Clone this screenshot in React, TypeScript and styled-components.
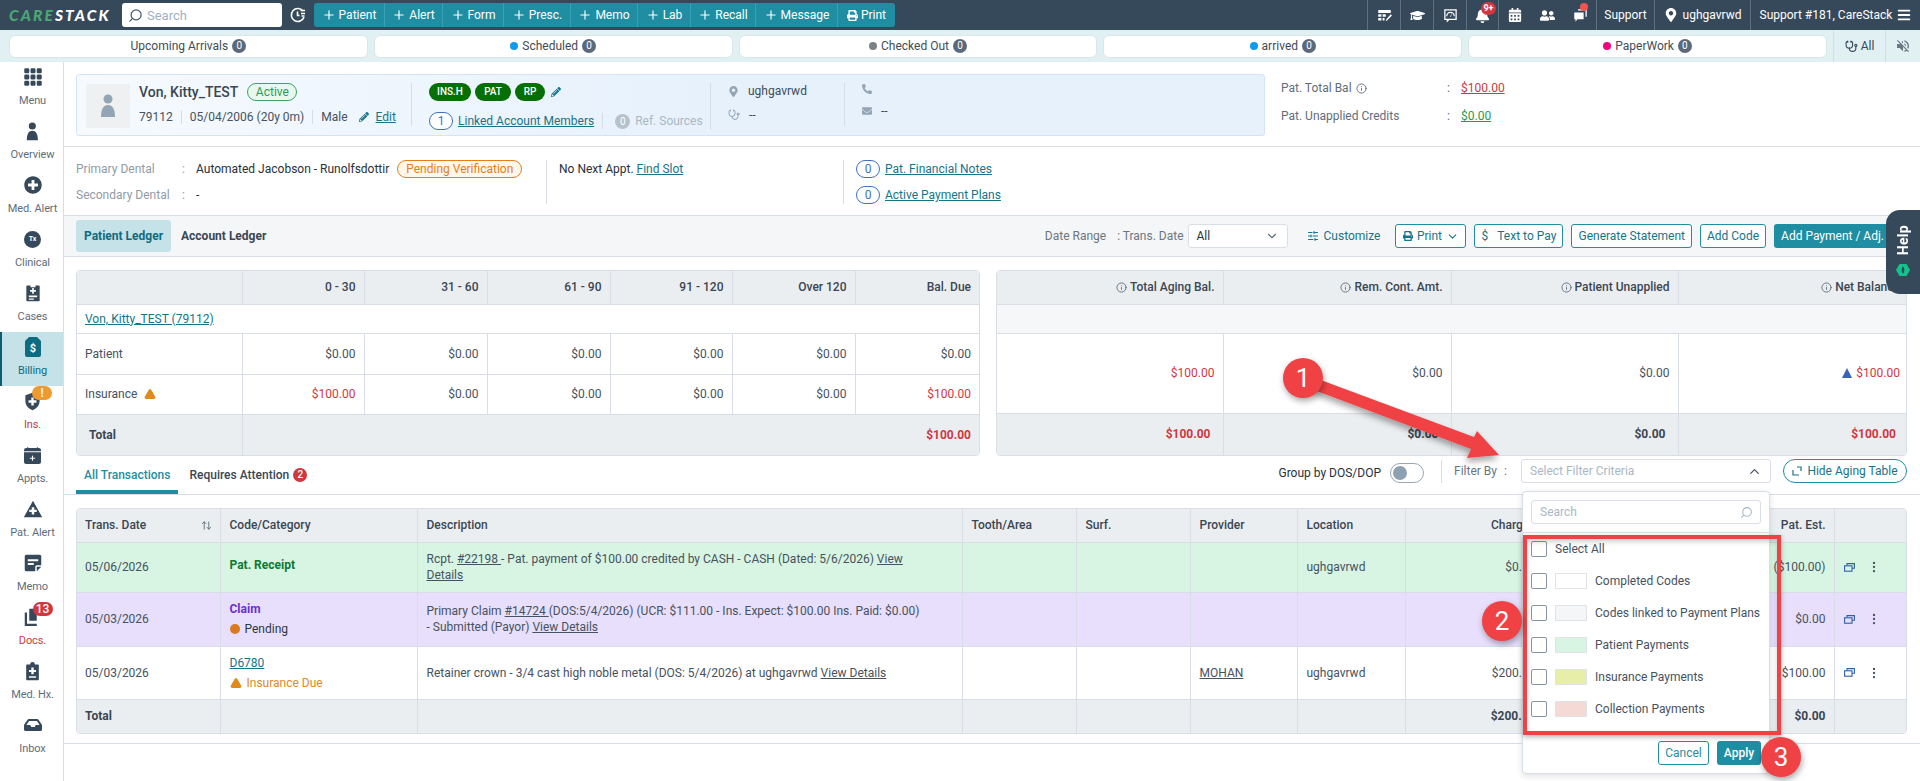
import React from "react";
import styled, { createGlobalStyle } from "styled-components";
import {
  FaBars,
  FaBell,
  FaCalendarAlt,
  FaGraduationCap,
  FaInbox,
  FaMapMarkerAlt,
  FaPencilAlt,
  FaPhoneAlt,
  FaPlusCircle,
  FaPrint,
  FaUserFriends,
  FaEnvelope,
} from "react-icons/fa";
import { BsCalendarPlusFill, BsGrid3X3GapFill } from "react-icons/bs";
import { MdVolumeOff } from "react-icons/md";
import {
  ArrowUpDown,
  ChevronDown,
  ChevronUp,
  Info,
  MoreVertical,
  Plus,
  Search,
  SlidersHorizontal,
  Stethoscope,
  TriangleAlert,
} from "lucide-react";

const TEAL = "#1f8ea3";
const DARK = "#36495a";
const LINE = "#d9dee6";
const HEAD = "#ebeef1";
const TEXT = "#46525f";
const RED = "#d1373f";

const GlobalStyle = createGlobalStyle`
  html, body { margin: 0; padding: 0; background: #fff; }
  body { font-family: Roboto, "Liberation Sans", sans-serif; font-size: 12px; color: ${TEXT}; }
  * { box-sizing: border-box; }
`;

const Page = styled.div`
  position: relative;
  width: 1920px;
  height: 781px;
  overflow: hidden;
  display: flex;
  flex-direction: column;
`;

/* top bar */
const TopBar = styled.header`
  height: 30px;
  background: ${DARK};
  display: flex;
  align-items: center;
  color: #fff;
  flex: none;
`;

const Logo = styled.div`
  width: 102px;
  margin-left: 9px;
  font-family: Lato, Roboto, sans-serif;
  font-style: italic;
  font-weight: 900;
  font-size: 15.5px;
  letter-spacing: 2.1px;
  white-space: nowrap;
  color: #fff;
  span { color: #4aa873; }
`;

const SearchBox = styled.div`
  width: 160px;
  height: 24px;
  margin-left: 11px;
  background: #fff;
  border-radius: 3px;
  display: flex;
  align-items: center;
  gap: 4px;
  padding-left: 6px;
  color: #9fb1c2;
  font-size: 13px;
  svg { transform: scaleX(-1); color: #44576a; }
`;

const ClockWrap = styled.div`
  width: 32px;
  display: flex;
  justify-content: center;
  margin-left: 0;
`;

const ActionGroup = styled.div`
  display: flex;
  height: 24px;
  background: ${TEAL};
  border-radius: 3px;
`;

const ActionButton = styled.div<{ $w: number }>`
  width: ${(p) => p.$w}px;
  display: flex;
  align-items: center;
  justify-content: center;
  gap: 3px;
  color: #fff;
  border-right: 1px solid #3aa0b3;
  &:last-child { border-right: 0; }
`;

const TopRight = styled.div`
  margin-left: auto;
  display: flex;
  height: 30px;
`;

const TopCell = styled.div<{ $w: number; $plain?: boolean }>`
  position: relative;
  width: ${(p) => p.$w}px;
  display: flex;
  align-items: center;
  justify-content: center;
  gap: 5px;
  white-space: nowrap;
  border-left: ${(p) => (p.$plain ? "0" : "1px solid #5d6f80")};
`;

const TinyBadge = styled.span`
  position: absolute;
  top: 2px;
  left: 14px;
  min-width: 15px;
  height: 13px;
  border-radius: 7px;
  background: ${RED};
  color: #fff;
  font-size: 9px;
  font-weight: 700;
  line-height: 13px;
  text-align: center;
`;

const RedDot = styled.span`
  position: absolute;
  top: 3px;
  right: 8px;
  width: 8px;
  height: 8px;
  border-radius: 50%;
  background: #f4544f;
`;

/* arrivals strip */
const StatusBar = styled.div`
  height: 32px;
  background: #e0f0f3;
  display: flex;
  align-items: center;
  padding-left: 9px;
  gap: 6px;
  flex: none;
`;

const StatusPill = styled.div`
  width: 359px;
  height: 23px;
  background: #fff;
  border: 1px solid #d8e7ea;
  border-radius: 6px;
  display: flex;
  align-items: center;
  justify-content: center;
  gap: 4px;
  color: #3f4c59;
`;

const Dot = styled.span<{ $c: string }>`
  width: 8px;
  height: 8px;
  border-radius: 50%;
  background: ${(p) => p.$c};
`;

const CountBadge = styled.span`
  width: 14px;
  height: 14px;
  border-radius: 50%;
  background: #5a6a7c;
  color: #fff;
  font-size: 10px;
  line-height: 14px;
  text-align: center;
`;

const StripTool = styled.div<{ $w: number; $c?: string }>`
  width: ${(p) => p.$w}px;
  height: 32px;
  display: flex;
  align-items: center;
  justify-content: center;
  gap: 3px;
  border-left: 1px solid #cfe0e4;
  color: ${(p) => p.$c || DARK};
`;

const ToolRow = styled.div`
  display: flex;
  margin-left: 0;
`;

/* side nav */
const Body = styled.div`
  flex: 1;
  display: flex;
  min-height: 0;
`;

const SideNav = styled.nav`
  width: 64px;
  flex: none;
  border-right: 1px solid ${LINE};
`;

const NavItem = styled.div<{ $active?: boolean }>`
  height: 54px;
  padding-top: 5px;
  display: flex;
  flex-direction: column;
  align-items: center;
  background: ${(p) => (p.$active ? "#c5e2e8" : "transparent")};
  border-left: 2px solid ${(p) => (p.$active ? "#0d5e70" : "transparent")};
  margin-right: 0;
`;

const NavIcon = styled.div<{ $c?: string }>`
  position: relative;
  height: 20px;
  display: flex;
  align-items: center;
  color: ${(p) => p.$c || DARK};
`;

const NavLabel = styled.div<{ $c?: string }>`
  margin-top: 7px;
  font-size: 11px;
  line-height: 14px;
  letter-spacing: -0.1px;
  color: ${(p) => p.$c || "#5f6d7b"};
  white-space: nowrap;
`;

const TxCircle = styled.div`
  width: 17px;
  height: 17px;
  border-radius: 50%;
  background: ${DARK};
  color: #fff;
  font-size: 7px;
  font-weight: 700;
  line-height: 17px;
  text-align: center;
`;

const NavBadge = styled.span<{ $c: string }>`
  position: absolute;
  top: -5px;
  left: 9px;
  width: 20px;
  height: 14px;
  border-radius: 7px;
  background: ${(p) => p.$c};
  color: #fff;
  font-size: 12px;
  font-weight: 500;
  line-height: 14px;
  text-align: center;
`;

/* main column */
const Main = styled.main`
  flex: 1;
  min-width: 0;
  display: flex;
  flex-direction: column;
`;

const PatientBar = styled.section`
  height: 85px;
  padding: 12px 0 0 12px;
  display: flex;
  border-bottom: 1px solid ${LINE};
  flex: none;
`;

const PatientCard = styled.div`
  width: 1189px;
  height: 62px;
  background: linear-gradient(90deg, #f6faff 0%, #e6f1fc 55%);
  border: 1px solid #d5e3f7;
  border-radius: 3px;
  display: grid;
  grid-template-columns: 335px 299px 134px 1fr;
  grid-template-rows: 60px;
  align-items: stretch;
`;

const CardCol = styled.div<{ $last?: boolean }>`
  position: relative;
  margin: 8px 0 9px;
  border-right: ${(p) => (p.$last ? "0" : "1px solid #d5dde6")};
  display: flex;
  flex-direction: column;
  justify-content: space-between;
`;

const PersonCol = styled(CardCol)`
  flex-direction: row;
  justify-content: flex-start;
  margin-left: 9px;
  gap: 9px;
`;

const Avatar = styled.div`
  width: 44px;
  height: 44px;
  margin-top: 1px;
  background: #eef0f2;
  border-radius: 2px;
  display: flex;
  align-items: center;
  justify-content: center;
  color: #93a4b4;
`;

const PersonInfo = styled.div`
  display: flex;
  flex-direction: column;
  gap: 9px;
`;

const PatientName = styled.div`
  display: flex;
  align-items: center;
  gap: 9px;
  height: 18px;
  font-size: 14px;
  font-weight: 500;
  color: #3a4653;
`;

const ActiveTag = styled.span`
  height: 18px;
  width: 50px;
  border: 1px solid #3aa663;
  border-radius: 9px;
  background: #e9f8ee;
  color: #2b9a56;
  font-size: 12px;
  font-weight: 400;
  line-height: 16px;
  text-align: center;
`;

const MetaRow = styled.div`
  display: flex;
  align-items: center;
  height: 14px;
`;

const MetaItem = styled.span`
  padding-right: 8px;
  margin-right: 8px;
  border-right: 1px solid #d5dde6;
  line-height: 14px;
  white-space: nowrap;
`;

const TealLink = styled.a`
  color: #14758a;
  text-decoration: underline;
  white-space: nowrap;
`;

const TagsCol = styled(CardCol)`
  padding-left: 17px;
  margin-bottom: 5px;
`;

const TagRow = styled.div`
  display: flex;
  align-items: center;
  gap: 4px;
  height: 18px;
`;

const GreenTag = styled.span<{ $w: number }>`
  width: ${(p) => p.$w}px;
  height: 18px;
  border-radius: 9px;
  background: #067006;
  color: #fff;
  font-size: 10px;
  font-weight: 500;
  line-height: 18px;
  text-align: center;
`;

const RingCount = styled.span<{ $w?: number }>`
  width: ${(p) => p.$w || 24}px;
  height: 18px;
  border: 1px solid #3e6fc4;
  border-radius: 9px;
  color: #3e6fc4;
  background: #fff;
  line-height: 16px;
  text-align: center;
  flex: none;
`;

const MutedCount = styled.span`
  width: 15px;
  height: 15px;
  border-radius: 50%;
  background: #b5c2cc;
  color: #fff;
  font-size: 10px;
  line-height: 15px;
  text-align: center;
`;

const LinkedRow = styled.div`
  display: flex;
  align-items: center;
  gap: 5px;
`;

const MutedText = styled.span`
  color: #a9b8c4;
  white-space: nowrap;
`;

const ThinRule = styled.span`
  width: 1px;
  height: 16px;
  background: #d5dde6;
  margin: 0 7px 0 3px;
`;

const InfoLines = styled(CardCol)`
  padding: 1px 0 4px 17px;
`;

const ContactCol = styled(CardCol)`
  margin: 7px 0 9px;
  padding: 0 0 8px 17px;
`;

const InfoLine = styled.div`
  display: flex;
  align-items: center;
  gap: 9px;
  height: 14px;
  color: #3f4c59;
  svg { color: #93a4b4; flex: none; }
`;

const Balances = styled.div`
  margin: 7px 0 0 16px;
  display: grid;
  grid-template-columns: 166px 14px auto;
  grid-auto-rows: 14px;
  row-gap: 14px;
  align-items: center;
  align-content: start;
  color: #5f6d7b;
`;

const BalanceLabel = styled.span`
  display: flex;
  align-items: center;
  gap: 4px;
`;

const Amount = styled.a<{ $c: string }>`
  color: ${(p) => p.$c};
  text-decoration: underline;
`;

const InsuranceBar = styled.section`
  height: 69px;
  padding: 13px 0 0 12px;
  display: flex;
  border-bottom: 1px solid ${LINE};
  flex: none;
`;

const InsuranceGrid = styled.div`
  width: 482px;
  display: grid;
  grid-template-columns: 106px 14px 1fr;
  grid-auto-rows: 18px;
  row-gap: 8px;
  align-items: center;
  align-content: start;
`;

const GreyLabel = styled.span`
  color: #8f9ba7;
`;

const DarkValue = styled.span`
  display: flex;
  align-items: center;
  gap: 8px;
  color: #26313c;
  white-space: nowrap;
`;

const PendingTag = styled.span`
  width: 125px;
  height: 18px;
  border: 1px solid #e57f15;
  border-radius: 9px;
  background: #fff6ec;
  color: #e57f15;
  line-height: 16px;
  text-align: center;
`;

const NextAppt = styled.div`
  width: 297px;
  height: 44px;
  border-left: 1px solid ${LINE};
  padding: 2px 0 0 12px;
  margin-left: -12px;
  color: #26313c;
  line-height: 14px;
`;

const NotesCol = styled.div`
  height: 44px;
  border-left: 1px solid ${LINE};
  padding-left: 12px;
  display: flex;
  flex-direction: column;
  justify-content: space-between;
  margin-top: 0;
`;

const LedgerBar = styled.section`
  height: 41px;
  background: #f5f6f8;
  border-bottom: 1px solid ${LINE};
  padding: 0 29px 0 12px;
  display: flex;
  align-items: center;
  flex: none;
`;

const LedgerTab = styled.div<{ $on?: boolean }>`
  height: 32px;
  padding: 0 8px;
  margin-right: ${(p) => (p.$on ? "2px" : "0")};
  border-radius: 3px;
  display: flex;
  align-items: center;
  font-weight: 700;
  background: ${(p) => (p.$on ? "#c5e2e8" : "transparent")};
  color: ${(p) => (p.$on ? "#0f6b7e" : "#3a4653")};
`;

const LedgerTools = styled.div`
  margin-left: auto;
  display: flex;
  align-items: center;
`;

const ToolLabel = styled.span<{ $mr?: number }>`
  color: #6a7682;
  margin-right: ${(p) => p.$mr || 0}px;
  white-space: nowrap;
`;

const SelectBox = styled.div`
  width: 100px;
  height: 24px;
  margin: 0 19px 0 4px;
  background: #fff;
  border: 1px solid ${LINE};
  border-radius: 3px;
  padding: 0 8px;
  display: flex;
  align-items: center;
  justify-content: space-between;
  color: #26313c;
  svg { color: #5f6d7b; }
`;

const CustomizeLink = styled.div`
  display: flex;
  align-items: center;
  gap: 5px;
  color: #14758a;
  margin-right: 15px;
`;

const OutlineButton = styled.div<{ $w?: number }>`
  height: 24px;
  ${(p) => (p.$w ? `width: ${p.$w}px; justify-content: center;` : "padding: 0 6px;")}
  margin-right: 8px;
  border: 1px solid ${TEAL};
  border-radius: 3px;
  background: #fff;
  color: #14758a;
  display: flex;
  align-items: center;
  gap: 4px;
  white-space: nowrap;
`;

const FilledButton = styled.div`
  height: 24px;
  padding: 0 7px;
  border-radius: 3px;
  background: ${TEAL};
  color: #fff;
  display: flex;
  align-items: center;
  white-space: nowrap;
`;

/* aging tables */
const AgingSection = styled.section`
  height: 198px;
  padding: 13px 13px 0 12px;
  display: flex;
  gap: 16px;
  flex: none;
`;

const TableFrame = styled.div<{ $w: number }>`
  width: ${(p) => p.$w}px;
  border: 1px solid ${LINE};
  border-radius: 4px;
  overflow: hidden;
  align-self: flex-start;
`;

const Grid = styled.table`
  width: 100%;
  border-collapse: collapse;
  table-layout: fixed;
`;

const Row = styled.tr<{ $h: number; $bg?: string }>`
  height: ${(p) => p.$h}px;
  background: ${(p) => p.$bg || "#fff"};
`;

const Th = styled.th<{ $right?: boolean }>`
  background: ${HEAD};
  font-weight: 500;
  color: #3a4653;
  padding: 0 8px 0 9px;
  text-align: ${(p) => (p.$right ? "right" : "left")};
  border: 1px solid ${LINE};
  border-width: 0 1px 1px 0;
  white-space: nowrap;
  &:first-child { padding-left: 8px; }
  &:last-child { border-right: 0; }
  svg { vertical-align: -2px; margin-right: 3px; color: #5f6d7b; }
`;

const Td = styled.td<{ $right?: boolean; $c?: string; $bold?: boolean; $head?: boolean; $pr?: number }>`
  padding: 0 ${(p) => p.$pr || 8}px 0 9px;
  text-align: ${(p) => (p.$right ? "right" : "left")};
  color: ${(p) => p.$c || TEXT};
  font-weight: ${(p) => (p.$bold ? 700 : 400)};
  background: ${(p) => (p.$head ? HEAD : "transparent")};
  border: 1px solid ${LINE};
  border-width: 0 1px 1px 0;
  line-height: 16px;
  &:first-child { padding-left: 8px; }
  &:last-child { border-right: 0; }
  tr:last-child > & { border-bottom: 0; }
`;

const TotalLabel = styled(Td)`
  &:first-child { padding-left: 12px; }
`;

const BlueUp = styled.span`
  display: inline-block;
  width: 0;
  height: 0;
  margin-right: 4px;
  border-left: 5px solid transparent;
  border-right: 5px solid transparent;
  border-bottom: 10px solid #3a62b8;
  vertical-align: -1px;
`;

/* transactions */
const TabsBar = styled.section`
  height: 40px;
  border-bottom: 1px solid ${LINE};
  padding: 0 13px 0 12px;
  display: flex;
  align-items: stretch;
  flex: none;
`;

const TxTab = styled.div<{ $on?: boolean }>`
  padding: 0 8px;
  margin-right: ${(p) => (p.$on ? "3px" : "0")};
  display: flex;
  align-items: center;
  gap: 4px;
  font-weight: 500;
  color: ${(p) => (p.$on ? TEAL : "#3a4653")};
  border-bottom: 4px solid ${(p) => (p.$on ? TEAL : "transparent")};
  padding-top: 4px;
`;

const AttentionBadge = styled.span`
  width: 14px;
  height: 14px;
  border-radius: 50%;
  background: ${RED};
  color: #fff;
  font-size: 10px;
  line-height: 14px;
  text-align: center;
`;

const FilterTools = styled.div`
  margin-left: auto;
  display: flex;
  align-items: center;
  padding-bottom: 7px;
`;

const GroupLabel = styled.span`
  color: #26313c;
  margin-top: 3px;
`;

const Toggle = styled.div`
  width: 34px;
  height: 20px;
  margin: 3px 17px 0 9px;
  border: 1px solid #9aa8b5;
  border-radius: 10px;
  padding: 2px;
  background: #fff;
  &::before {
    content: "";
    display: block;
    width: 14px;
    height: 14px;
    border-radius: 50%;
    background: #8ea1b2;
  }
`;

const FilterLabel = styled.div`
  height: 23px;
  border-left: 1px solid ${LINE};
  padding-left: 12px;
  color: #6a7682;
  display: flex;
  align-items: center;
  width: 80px;
  justify-content: space-between;
  padding-right: 14px;
`;

const FilterSelect = styled.div`
  width: 250px;
  height: 24px;
  border: 1px solid ${LINE};
  border-radius: 3px;
  padding: 0 8px;
  color: #a9b8c4;
  background: #fff;
  display: flex;
  align-items: center;
  justify-content: space-between;
  svg { color: #46525f; }
`;

const HideButton = styled.div`
  width: 124px;
  height: 24px;
  margin-left: 12px;
  border: 1px solid ${TEAL};
  border-radius: 12px;
  color: #14758a;
  display: flex;
  align-items: center;
  justify-content: center;
  gap: 5px;
`;

const TxSection = styled.section`
  height: 249px;
  padding: 13px 13px 0 12px;
  border-bottom: 1px solid ${LINE};
  flex: none;
`;

const DescLink = styled.a`
  color: ${TEXT};
  text-decoration: underline;
`;

const SortIcon = styled(ArrowUpDown)`
  float: right;
  margin: 2px 0 0 0 !important;
`;

const CodeTitle = styled.div<{ $c: string; $link?: boolean }>`
  color: ${(p) => p.$c};
  font-weight: ${(p) => (p.$link ? 400 : 700)};
  text-decoration: ${(p) => (p.$link ? "underline" : "none")};
  margin-bottom: 4px;
`;

const CodeStatus = styled.div<{ $c: string }>`
  display: flex;
  align-items: center;
  gap: 5px;
  color: ${(p) => p.$c};
`;

const PendingDot = styled.span`
  width: 10px;
  height: 10px;
  border-radius: 50%;
  background: #d97a1c;
`;

const RowTools = styled.div`
  display: flex;
  align-items: center;
  gap: 12px;
  color: #2e5fa8;
  svg:last-child { color: #4a5664; }
`;

/* open filter menu */
const FilterMenu = styled.div`
  position: absolute;
  left: 1522px;
  top: 491px;
  width: 248px;
  height: 283px;
  background: #fff;
  border: 1px solid ${LINE};
  border-radius: 4px;
  box-shadow: 0 2px 6px rgba(40, 50, 60, 0.15);
`;

const MenuSearch = styled.div`
  margin: 8px 8px 0;
  height: 24px;
  border: 1px solid ${LINE};
  border-radius: 3px;
  padding: 0 7px 0 8px;
  color: #a9b8c4;
  display: flex;
  align-items: center;
  justify-content: space-between;
  svg { transform: scaleX(-1); }
`;

const MenuList = styled.div`
  margin-top: 8px;
  border-top: 1px solid ${LINE};
  padding: 0 0 0 8px;
  height: 200px;
`;

const MenuItem = styled.div`
  height: 32px;
  display: flex;
  align-items: center;
  gap: 8px;
  color: #46525f;
`;

const CheckBox = styled.span`
  width: 16px;
  height: 16px;
  border: 1px solid #8696a5;
  border-radius: 2px;
  background: #fff;
  flex: none;
`;

const Swatch = styled.span<{ $c: string }>`
  width: 32px;
  height: 16px;
  border: 1px solid #e0e4e8;
  background: ${(p) => p.$c};
  flex: none;
`;

const MenuFooter = styled.div`
  display: flex;
  justify-content: flex-end;
  gap: 8px;
  padding: 9px 8px 0 0;
`;

const CancelButton = styled.div`
  width: 51px;
  height: 24px;
  border: 1px solid ${TEAL};
  border-radius: 3px;
  color: ${TEAL};
  line-height: 22px;
  text-align: center;
`;

const ApplyButton = styled.div`
  width: 44px;
  height: 24px;
  border-radius: 3px;
  background: ${TEAL};
  color: #fff;
  line-height: 24px;
  text-align: center;
  font-weight: 500;
`;

/* help tab and the red marks drawn on the screenshot */
const HelpTab = styled.div`
  position: absolute;
  right: 0;
  top: 210px;
  width: 34px;
  height: 84px;
  background: ${DARK};
  border-radius: 14px 0 0 14px;
  display: flex;
  flex-direction: column;
  align-items: center;
  padding-top: 15px;
  gap: 8px;
  color: #fff;
`;

const HelpText = styled.span`
  writing-mode: vertical-rl;
  transform: rotate(180deg);
  font-size: 14px;
  font-weight: 700;
  letter-spacing: 0.3px;
`;

const MarkLayer = styled.svg`
  position: absolute;
  left: 0;
  top: 0;
  pointer-events: none;
`;

const Callout = styled.div<{ $x: number; $y: number }>`
  position: absolute;
  left: ${(p) => p.$x - 20}px;
  top: ${(p) => p.$y - 20}px;
  width: 40px;
  height: 40px;
  border-radius: 50%;
  background: #f04244;
  color: #fff;
  font-size: 26px;
  line-height: 40px;
  text-align: center;
  box-shadow: 1px 3px 6px rgba(0, 0, 0, 0.35);
`;

const RedFrame = styled.div`
  position: absolute;
  left: 1523px;
  top: 535px;
  width: 258px;
  height: 200px;
  border: 4px solid #f04244;
  box-shadow: 0 2px 5px rgba(0, 0, 0, 0.3), inset 0 3px 5px rgba(0, 0, 0, 0.18);
`;

const Svg = ({ s, children, vb = "0 0 24 24" }: { s: number; children: React.ReactNode; vb?: string }) => (
  <svg width={s} height={s} viewBox={vb} fill="currentColor">
    {children}
  </svg>
);

const PersonIcon = ({ h }: { h: number }) => (
  <svg width={(h * 16) / 24} height={h} viewBox="0 0 16 24" fill="currentColor">
    <circle cx="8" cy="5" r="4.500" />
    <path d="M1 23C1 15 3.500 11 8 11s7 4 7 12z" />
  </svg>
);

const RestoreIcon = () => (
  <svg width="11" height="9" viewBox="0 0 11 9" fill="none" stroke="currentColor" strokeWidth="1.1">
    <path d="M3 2.500V.600h7.400v4.600H8" />
    <rect x=".6" y="2.800" width="7.400" height="5.400" />
  </svg>
);

const ClockLines = () => (
  <svg width="16" height="16" viewBox="0 0 16 16" fill="none" stroke="#fff" strokeWidth="1.6">
    <path d="M13 4A6.500 6.500 0 1 0 14 10" />
    <path d="M7.500 4.500v4h2M10.500 3.500H15M11 6.500h4M11.500 9h3" />
  </svg>
);

const navItems: { label: string; icon: React.ReactNode; active?: boolean; c?: string; lc?: string; badge?: [string, string] }[] = [
  { label: "Menu", icon: <BsGrid3X3GapFill size={20} /> },
  { label: "Overview", icon: <PersonIcon h={19} /> },
  { label: "Med. Alert", icon: <FaPlusCircle size={18} /> },
  { label: "Clinical", icon: <TxCircle>Tx</TxCircle> },
  {
    label: "Cases",
    icon: (
      <Svg s={20}>
        <path d="M5 3h4v2h6V3h4a1 1 0 0 1 1 1v17a1 1 0 0 1-1 1H5a1 1 0 0 1-1-1V4a1 1 0 0 1 1-1zm2 12v2h10v-2zm0 3.500v1.500h6v-1.500zM11 6v2.500H8.500v2H11V13h2v-2.500h2.500v-2H13V6z" fillRule="evenodd" />
      </Svg>
    ),
  },
  {
    label: "Billing",
    active: true,
    c: "#0f6b7e",
    lc: "#0f6b7e",
    icon: (
      <svg width="16" height="20" viewBox="0 0 16 20">
        <path d="M4 0h8l4 4v14a2 2 0 0 1-2 2H2a2 2 0 0 1-2-2V4z" fill="currentColor" />
        <text x="8" y="15" fontSize="11" fontWeight="700" fill="#fff" textAnchor="middle" fontFamily="Roboto">$</text>
      </svg>
    ),
  },
  {
    label: "Ins.",
    lc: RED,
    badge: ["!", "#ee9a2f"],
    icon: (
      <Svg s={19}>
        <path d="M12 1l9 3v7c0 6-4 10-9 12-5-2-9-6-9-12V4zm-1.500 6v3.500H7v3h3.500V17h3v-3.500H17v-3h-3.500V7z" fillRule="evenodd" />
      </Svg>
    ),
  },
  { label: "Appts.", icon: <BsCalendarPlusFill size={17} /> },
  {
    label: "Pat. Alert",
    icon: (
      <Svg s={20}>
        <path d="M12 2l11 20H1zm-1.500 8v3H7.500v2.500h3v3h3v-3h3V13h-3v-3z" fillRule="evenodd" />
      </Svg>
    ),
  },
  {
    label: "Memo",
    icon: (
      <Svg s={18}>
        <path d="M3 1h18a2 2 0 0 1 2 2v12h-6a2 2 0 0 0-2 2v6H3a2 2 0 0 1-2-2V3a2 2 0 0 1 2-2zm2 6v2.500h14V7zm0 5v2.500h8V12zm12 5h6l-6 6z" fillRule="evenodd" />
      </Svg>
    ),
  },
  {
    label: "Docs.",
    lc: RED,
    badge: ["13", RED],
    icon: (
      <Svg s={18}>
        <path d="M7 1h10v16H7zM1 6h3v15h13v3H1z" />
      </Svg>
    ),
  },
  {
    label: "Med. Hx.",
    icon: (
      <Svg s={19}>
        <path d="M5 3h4a3 3 0 0 1 6 0h4a1 1 0 0 1 1 1v18a1 1 0 0 1-1 1H5a1 1 0 0 1-1-1V4a1 1 0 0 1 1-1zm5.500 4v3H7.500v2.500h3v3h3v-3h3V10h-3V7zM7.500 18v2h9v-2z" fillRule="evenodd" />
      </Svg>
    ),
  },
  { label: "Inbox", icon: <FaInbox size={18} /> },
];

const actions: [string, number][] = [
  ["Patient", 71],
  ["Alert", 58],
  ["Form", 61],
  ["Presc.", 67],
  ["Memo", 67],
  ["Lab", 53],
  ["Recall", 65],
  ["Message", 82],
];

const filterOptions: [string, string][] = [
  ["Completed Codes", "#ffffff"],
  ["Codes linked to Payment Plans", "#f4f6f8"],
  ["Patient Payments", "#d8f5e3"],
  ["Insurance Payments", "#e6eea8"],
  ["Collection Payments", "#f5d9d5"],
];

const agingColumns = [165, 122, 123, 123, 122, 123, 124];
const netColumns = [226, 228, 227, 230];
const txColumns = [143, 197, 545, 114, 114, 107, 108, 139, 156, 134, 74];

const zero = "$0.00";

export default function App() {
  return (
    <Page>
      <GlobalStyle />
      <TopBar>
        <Logo>
          <span>CARE</span>STACK
        </Logo>
        <SearchBox>
          <Search size={15} />
          Search
        </SearchBox>
        <ClockWrap>
          <ClockLines />
        </ClockWrap>
        <ActionGroup>
          {actions.map(([label, w]) => (
            <ActionButton key={label} $w={w}>
              <Plus size={14} />
              {label}
            </ActionButton>
          ))}
          <ActionButton $w={57}>
            <FaPrint size={11} />
            Print
          </ActionButton>
        </ActionGroup>
        <TopRight>
          <TopCell $w={33}>
            <Svg s={15}>
              <path d="M2 3h20v5H2zM2 10h5v4H2zM9 10h5v4H9zM2 16h5v4H2zM9 16h3v4H9zM16 20l-2 1 1-3 7-8 2 2z" />
            </Svg>
          </TopCell>
          <TopCell $w={33}>
            <FaGraduationCap size={15} />
          </TopCell>
          <TopCell $w={33}>
            <Svg s={15}>
              <path d="M2 2h20v17H10l-4 4v-4H2zm2 2v13h16V4zm8 2a7 7 0 0 1 7 7h-2a5 5 0 0 0-10 0H5a7 7 0 0 1 7-7zm3 1.500L12.500 14h-1.500z" fillRule="evenodd" />
            </Svg>
          </TopCell>
          <TopCell $w={32}>
            <FaBell size={15} />
            <TinyBadge>9+</TinyBadge>
          </TopCell>
          <TopCell $w={33}>
            <FaCalendarAlt size={14} />
          </TopCell>
          <TopCell $w={33} $plain>
            <FaUserFriends size={15} />
          </TopCell>
          <TopCell $w={32} $plain>
            <Svg s={15}>
              <path d="M8 2h14v12h-2V4H8zM2 7h15v11H7l-3 4v-4H2z" />
            </Svg>
            <RedDot />
          </TopCell>
          <TopCell $w={58}>Support</TopCell>
          <TopCell $w={96}>
            <FaMapMarkerAlt size={14} />
            ughgavrwd
          </TopCell>
          <TopCell $w={170}>
            Support #181, CareStack
            <FaBars size={14} />
          </TopCell>
        </TopRight>
      </TopBar>

      <StatusBar>
        <StatusPill>
          Upcoming Arrivals <CountBadge>0</CountBadge>
        </StatusPill>
        <StatusPill>
          <Dot $c="#0d9bf0" /> Scheduled <CountBadge>0</CountBadge>
        </StatusPill>
        <StatusPill>
          <Dot $c="#7c8288" /> Checked Out <CountBadge>0</CountBadge>
        </StatusPill>
        <StatusPill>
          <Dot $c="#0d9bf0" /> arrived <CountBadge>0</CountBadge>
        </StatusPill>
        <StatusPill>
          <Dot $c="#f0047f" /> PaperWork <CountBadge>0</CountBadge>
        </StatusPill>
        <ToolRow>
          <StripTool $w={52}>
            <Stethoscope size={13} />
            All
          </StripTool>
          <StripTool $w={35} $c="#6a7682">
            <MdVolumeOff size={16} />
          </StripTool>
        </ToolRow>
      </StatusBar>

      <Body>
        <SideNav>
          {navItems.map((item) => (
            <NavItem key={item.label} $active={item.active}>
              <NavIcon $c={item.c}>
                {item.icon}
                {item.badge && <NavBadge $c={item.badge[1]}>{item.badge[0]}</NavBadge>}
              </NavIcon>
              <NavLabel $c={item.lc}>{item.label}</NavLabel>
            </NavItem>
          ))}
        </SideNav>

        <Main>
          <PatientBar>
            <PatientCard>
              <PersonCol>
                <Avatar>
                  <PersonIcon h={24} />
                </Avatar>
                <PersonInfo>
                  <PatientName>
                    Von, Kitty_TEST <ActiveTag>Active</ActiveTag>
                  </PatientName>
                  <MetaRow>
                    <MetaItem>79112</MetaItem>
                    <MetaItem>05/04/2006 (20y 0m)</MetaItem>
                    <span>Male</span>
                    <FaPencilAlt size={10} color="#14758a" style={{ margin: "0 7px 0 11px" }} />
                    <TealLink>Edit</TealLink>
                  </MetaRow>
                </PersonInfo>
              </PersonCol>
              <TagsCol>
                <TagRow>
                  <GreenTag $w={42}>INS.H</GreenTag>
                  <GreenTag $w={36}>PAT</GreenTag>
                  <GreenTag $w={30}>RP</GreenTag>
                  <FaPencilAlt size={10} color="#14758a" style={{ marginLeft: 2 }} />
                </TagRow>
                <LinkedRow>
                  <RingCount>1</RingCount>
                  <TealLink>Linked Account Members</TealLink>
                  <ThinRule />
                  <MutedCount>0</MutedCount>
                  <MutedText>Ref. Sources</MutedText>
                </LinkedRow>
              </TagsCol>
              <InfoLines>
                <InfoLine>
                  <FaMapMarkerAlt size={11} />
                  ughgavrwd
                </InfoLine>
                <InfoLine>
                  <Stethoscope size={12} />
                  --
                </InfoLine>
              </InfoLines>
              <ContactCol $last>
                <InfoLine>
                  <FaPhoneAlt size={10} />
                </InfoLine>
                <InfoLine>
                  <FaEnvelope size={10} />
                  --
                </InfoLine>
              </ContactCol>
            </PatientCard>
            <Balances>
              <BalanceLabel>
                Pat. Total Bal <Info size={11} />
              </BalanceLabel>
              <span>:</span>
              <Amount $c={RED}>$100.00</Amount>
              <BalanceLabel>Pat. Unapplied Credits</BalanceLabel>
              <span>:</span>
              <Amount $c="#1f9a52">$0.00</Amount>
            </Balances>
          </PatientBar>

          <InsuranceBar>
            <InsuranceGrid>
              <GreyLabel>Primary Dental</GreyLabel>
              <GreyLabel>:</GreyLabel>
              <DarkValue>
                Automated Jacobson - Runolfsdottir <PendingTag>Pending Verification</PendingTag>
              </DarkValue>
              <GreyLabel>Secondary Dental</GreyLabel>
              <GreyLabel>:</GreyLabel>
              <DarkValue>-</DarkValue>
            </InsuranceGrid>
            <NextAppt>
              No Next Appt. <TealLink>Find Slot</TealLink>
            </NextAppt>
            <NotesCol>
              <LinkedRow>
                <RingCount>0</RingCount>
                <TealLink>Pat. Financial Notes</TealLink>
              </LinkedRow>
              <LinkedRow>
                <RingCount>0</RingCount>
                <TealLink>Active Payment Plans</TealLink>
              </LinkedRow>
            </NotesCol>
          </InsuranceBar>

          <LedgerBar>
            <LedgerTab $on>Patient Ledger</LedgerTab>
            <LedgerTab>Account Ledger</LedgerTab>
            <LedgerTools>
              <ToolLabel $mr={11}>Date Range</ToolLabel>
              <ToolLabel>: Trans. Date</ToolLabel>
              <SelectBox>
                All
                <ChevronDown size={14} />
              </SelectBox>
              <CustomizeLink>
                <SlidersHorizontal size={12} />
                Customize
              </CustomizeLink>
              <OutlineButton $w={71}>
                <FaPrint size={10} />
                Print
                <ChevronDown size={13} />
              </OutlineButton>
              <OutlineButton $w={89}>
                $&nbsp;&nbsp;&nbsp;Text to Pay
              </OutlineButton>
              <OutlineButton>Generate Statement</OutlineButton>
              <OutlineButton>Add Code</OutlineButton>
              <FilledButton>Add Payment / Adj.</FilledButton>
            </LedgerTools>
          </LedgerBar>

          <AgingSection>
            <TableFrame $w={904}>
              <Grid>
                <colgroup>
                  {agingColumns.map((w, i) => (
                    <col key={i} width={w} />
                  ))}
                </colgroup>
                <tbody>
                  <Row $h={33}>
                    <Th />
                    {["0 - 30", "31 - 60", "61 - 90", "91 - 120", "Over 120", "Bal. Due"].map((h) => (
                      <Th key={h} $right>
                        {h}
                      </Th>
                    ))}
                  </Row>
                  <Row $h={29}>
                    <Td colSpan={7}>
                      <TealLink>Von, Kitty_TEST (79112)</TealLink>
                    </Td>
                  </Row>
                  <Row $h={41}>
                    <Td>Patient</Td>
                    {[0, 1, 2, 3, 4, 5].map((i) => (
                      <Td key={i} $right>
                        {zero}
                      </Td>
                    ))}
                  </Row>
                  <Row $h={40}>
                    <Td>
                      Insurance <TriangleAlert size={12} fill="#e08a1e" color="#e08a1e" style={{ marginLeft: 4, verticalAlign: -2 }} />
                    </Td>
                    <Td $right $c={RED}>
                      $100.00
                    </Td>
                    {[0, 1, 2, 3].map((i) => (
                      <Td key={i} $right>
                        {zero}
                      </Td>
                    ))}
                    <Td $right $c={RED}>
                      $100.00
                    </Td>
                  </Row>
                  <Row $h={41} $bg={HEAD}>
                    <TotalLabel $bold $c="#3a4653">
                      Total
                    </TotalLabel>
                    <Td colSpan={6} $right $bold $c={RED}>
                      $100.00
                    </Td>
                  </Row>
                </tbody>
              </Grid>
            </TableFrame>
            <TableFrame $w={911}>
              <Grid>
                <colgroup>
                  {netColumns.map((w, i) => (
                    <col key={i} width={w} />
                  ))}
                </colgroup>
                <tbody>
                  <Row $h={33}>
                    {["Total Aging Bal.", "Rem. Cont. Amt.", "Patient Unapplied", "Net Balance"].map((h) => (
                      <Th key={h} $right>
                        <Info size={11} />
                        {h}
                      </Th>
                    ))}
                  </Row>
                  <Row $h={29} $bg="#f6f7f9">
                    <Td colSpan={4} />
                  </Row>
                  <Row $h={80}>
                    <Td $right $c={RED}>
                      $100.00
                    </Td>
                    <Td $right>{zero}</Td>
                    <Td $right>{zero}</Td>
                    <Td $right $c={RED}>
                      <BlueUp />
                      $100.00
                    </Td>
                  </Row>
                  <Row $h={42} $bg={HEAD}>
                    <Td $right $bold $c={RED} $pr={12}>
                      $100.00
                    </Td>
                    <Td $right $bold $c="#3a4653" $pr={12}>
                      {zero}
                    </Td>
                    <Td $right $bold $c="#3a4653" $pr={12}>
                      {zero}
                    </Td>
                    <Td $right $bold $c={RED} $pr={12}>
                      $100.00
                    </Td>
                  </Row>
                </tbody>
              </Grid>
            </TableFrame>
          </AgingSection>

          <TabsBar>
            <TxTab $on>All Transactions</TxTab>
            <TxTab>
              Requires Attention <AttentionBadge>2</AttentionBadge>
            </TxTab>
            <FilterTools>
              <GroupLabel>Group by DOS/DOP</GroupLabel>
              <Toggle />
              <FilterLabel>
                <span>Filter By</span>
                <span>:</span>
              </FilterLabel>
              <FilterSelect>
                Select Filter Criteria
                <ChevronUp size={15} />
              </FilterSelect>
              <HideButton>
                <svg width="10" height="10" viewBox="0 0 10 10" fill="none" stroke="currentColor" strokeWidth="1.2">
                  <path d="M1 4v5h6M5 1h4v4" />
                </svg>
                Hide Aging Table
              </HideButton>
            </FilterTools>
          </TabsBar>

          <TxSection>
            <TableFrame $w={1831}>
              <Grid>
                <colgroup>
                  {txColumns.map((w, i) => (
                    <col key={i} width={w} />
                  ))}
                </colgroup>
                <tbody>
                  <Row $h={33}>
                    <Th>
                      Trans. Date
                      <SortIcon size={11} />
                    </Th>
                    <Th>Code/Category</Th>
                    <Th>Description</Th>
                    <Th>Tooth/Area</Th>
                    <Th>Surf.</Th>
                    <Th>Provider</Th>
                    <Th>Location</Th>
                    <Th $right>Charges</Th>
                    <Th $right>Ins. Est.</Th>
                    <Th $right>Pat. Est.</Th>
                    <Th />
                  </Row>
                  <Row $h={50} $bg="#d8f5e3">
                    <Td>05/06/2026</Td>
                    <Td>
                      <CodeTitle $c="#0a7a34">Pat. Receipt</CodeTitle>
                    </Td>
                    <Td $pr={40}>
                      Rcpt. <DescLink>#22198 </DescLink>- Pat. payment of $100.00 credited by CASH - CASH (Dated: 5/6/2026){" "}
                      <DescLink>View Details</DescLink>
                    </Td>
                    <Td />
                    <Td />
                    <Td />
                    <Td>ughgavrwd</Td>
                    <Td $right>{zero}</Td>
                    <Td />
                    <Td $right>($100.00)</Td>
                    <Td>
                      <RowTools>
                        <RestoreIcon />
                        <MoreVertical size={14} />
                      </RowTools>
                    </Td>
                  </Row>
                  <Row $h={54} $bg="#e8dffd">
                    <Td>05/03/2026</Td>
                    <Td>
                      <CodeTitle $c="#6a2fd0">Claim</CodeTitle>
                      <CodeStatus $c="#2c3742">
                        <PendingDot />
                        Pending
                      </CodeStatus>
                    </Td>
                    <Td $pr={40}>
                      Primary Claim <DescLink>#14724 </DescLink>(DOS:5/4/2026) (UCR: $111.00 - Ins. Expect: $100.00 Ins. Paid: $0.00)
                      - Submitted (Payor) <DescLink>View Details</DescLink>
                    </Td>
                    <Td />
                    <Td />
                    <Td />
                    <Td />
                    <Td />
                    <Td />
                    <Td $right>{zero}</Td>
                    <Td>
                      <RowTools>
                        <RestoreIcon />
                        <MoreVertical size={14} />
                      </RowTools>
                    </Td>
                  </Row>
                  <Row $h={53}>
                    <Td>05/03/2026</Td>
                    <Td>
                      <CodeTitle $c="#14758a" $link>
                        D6780
                      </CodeTitle>
                      <CodeStatus $c="#e08a1e">
                        <TriangleAlert size={12} fill="#e08a1e" color="#e08a1e" />
                        Insurance Due
                      </CodeStatus>
                    </Td>
                    <Td $pr={40}>
                      Retainer crown - 3/4 cast high noble metal (DOS: 5/4/2026) at ughgavrwd <DescLink>View Details</DescLink>
                    </Td>
                    <Td />
                    <Td />
                    <Td>
                      <DescLink>MOHAN</DescLink>
                    </Td>
                    <Td>ughgavrwd</Td>
                    <Td $right>$200.00</Td>
                    <Td />
                    <Td $right>$100.00</Td>
                    <Td>
                      <RowTools>
                        <RestoreIcon />
                        <MoreVertical size={14} />
                      </RowTools>
                    </Td>
                  </Row>
                  <Row $h={34} $bg={HEAD}>
                    <Td $bold $c="#3a4653">
                      Total
                    </Td>
                    <Td />
                    <Td />
                    <Td />
                    <Td />
                    <Td />
                    <Td />
                    <Td $right $bold $c="#3a4653">
                      $200.00
                    </Td>
                    <Td />
                    <Td $right $bold $c="#3a4653">
                      {zero}
                    </Td>
                    <Td />
                  </Row>
                </tbody>
              </Grid>
            </TableFrame>
          </TxSection>
        </Main>
      </Body>

      <HelpTab>
        <HelpText>Help</HelpText>
        <svg width="14" height="14" viewBox="0 0 14 14">
          <path d="M3.500 1h7L14 7l-3.500 6h-7L0 7z" fill="#12c48b" />
          <path d="M7 3.500c1.800 1 1.800 6 0 7-1.800-1-1.800-6 0-7z" fill={DARK} />
        </svg>
      </HelpTab>

      <FilterMenu>
        <MenuSearch>
          Search
          <Search size={13} />
        </MenuSearch>
        <MenuList>
          <MenuItem>
            <CheckBox />
            Select All
          </MenuItem>
          {filterOptions.map(([label, color]) => (
            <MenuItem key={label}>
              <CheckBox />
              <Swatch $c={color} />
              {label}
            </MenuItem>
          ))}
        </MenuList>
        <MenuFooter>
          <CancelButton>Cancel</CancelButton>
          <ApplyButton>Apply</ApplyButton>
        </MenuFooter>
      </FilterMenu>

      <MarkLayer width="1920" height="781" viewBox="0 0 1920 781">
        <defs>
          <filter id="markShadow" x="-10%" y="-20%" width="120%" height="150%">
            <feDropShadow dx="-1" dy="4" stdDeviation="3" floodColor="#000" floodOpacity="0.35" />
          </filter>
        </defs>
        <path d="M1318 379L1474 437L1477 431L1499 455L1467 458L1471 449L1314 390Z" fill="#f04244" filter="url(#markShadow)" />
      </MarkLayer>
      <RedFrame />
      <Callout $x={1303} $y={378}>1</Callout>
      <Callout $x={1502} $y={621}>2</Callout>
      <Callout $x={1781} $y={757}>3</Callout>
    </Page>
  );
}
